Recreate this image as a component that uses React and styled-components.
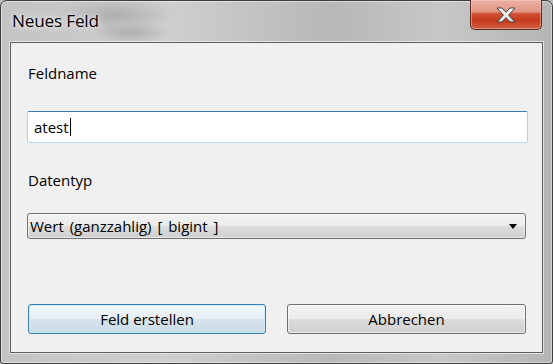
import React from "react";
import styled, { createGlobalStyle } from "styled-components";

const Global = createGlobalStyle`
  html, body { margin: 0; padding: 0; background: #b9b9b9; }
  body { font-family: "Open Sans", "Noto Sans", sans-serif; }
  * { box-sizing: border-box; }
`;

const Window = styled.div`
  width: 553px;
  height: 364px;
  border: 1px solid #3e3e3e;
  border-radius: 7px 7px 3px 3px;
  background:
    radial-gradient(ellipse 60px 18px at 115px 14px, rgba(140,140,140,0.45), rgba(140,140,140,0) 100%),
    radial-gradient(ellipse 40px 10px at 130px 32px, rgba(130,130,130,0.4), rgba(130,130,130,0) 100%),
    linear-gradient(to right, #c3c3c3 0%, #cfcfcf 30%, #b8b8b8 60%, #c7c7c7 80%, #b5b5b5 100%);
  box-shadow: inset 0 0 0 1px rgba(255,255,255,0.45);
  padding: 0 9px 10px 9px;
  display: flex;
  flex-direction: column;
`;

const TitleBar = styled.div`
  height: 41px;
  display: flex;
  align-items: flex-start;
  padding-left: 2px;
`;

const Title = styled.div`
  font-size: 17.2px;
  line-height: 22px;
  color: #000;
  margin-top: 9px;
  text-shadow: 0 0 8px rgba(255,255,255,0.9), 0 0 3px rgba(255,255,255,0.8);
  letter-spacing: -0.2px;
`;

const CloseButton = styled.div`
  margin-left: auto;
  margin-right: 1px;
  margin-top: -1px;
  width: 72px;
  height: 30px;
  border: 1px solid #5b2a22;
  border-top: none;
  border-radius: 0 0 5px 5px;
  background: linear-gradient(to bottom, #eab0a3 0%, #e39684 40%, #cf4f33 48%, #c7391d 70%, #d25e40 100%);
  box-shadow: inset 0 0 0 1px rgba(255,210,200,0.45);
  display: flex;
  align-items: center;
  justify-content: center;
`;

const Client = styled.div`
  flex: 1;
  background: #f0f0f0;
  border: 1px solid #5e5e5e;
  box-shadow: 0 0 0 1px rgba(235,235,235,0.85);
  display: flex;
  flex-direction: column;
  padding: 0 15px 0 16px;
`;

const Label = styled.div`
  font-size: 15px;
  color: #000;
  margin-left: 1px;
  margin-top: ${p => p.$top}px;
  line-height: 20px;
`;

const TextInput = styled.div`
  margin-top: ${p => p.$top}px;
  height: 32px;
  width: 501px;
  background: #fff;
  border: 1px solid #b5cfe7;
  border-top-color: #3d7bad;
  border-bottom-color: #b7d9ed;
  border-radius: 2px;
  display: flex;
  align-items: center;
  padding-left: 6px;
  font-size: 15px;
  color: #000;
`;

const Caret = styled.span`
  display: inline-block;
  width: 1px;
  height: 18px;
  background: #000;
  margin-left: 1px;
`;

const Select = styled.div`
  margin-top: ${p => p.$top}px;
  height: 26px;
  width: 499px;
  border: 1px solid #707070;
  border-radius: 3px;
  background: linear-gradient(to bottom, #f2f2f2 0%, #ebebeb 48%, #dddddd 52%, #cfcfcf 100%);
  box-shadow: inset 0 0 0 1px rgba(255,255,255,0.5);
  display: flex;
  align-items: center;
  padding: 0 8px 0 2px;
  font-size: 15px;
  color: #000;
`;

const SelectText = styled.span`
  flex: 1;
  word-spacing: 2px;
`;

const Arrow = styled.span`
  width: 0;
  height: 0;
  border-left: 4.5px solid transparent;
  border-right: 4.5px solid transparent;
  border-top: 5px solid #000;
`;

const ButtonRow = styled.div`
  margin-top: ${p => p.$top}px;
  display: flex;
  gap: 21px;
  padding-left: 1px;
`;

const Button = styled.div`
  width: ${p => p.$w}px;
  height: 30px;
  border: 1px solid ${p => (p.$default ? "#3c7fb1" : "#707070")};
  border-radius: 3px;
  background: ${p =>
    p.$default
      ? "linear-gradient(to bottom, #f3f7fa 0%, #e6eef3 48%, #d6e3ea 52%, #ccdde6 100%)"
      : "linear-gradient(to bottom, #f2f2f2 0%, #ebebeb 48%, #dddddd 52%, #cfcfcf 100%)"};
  box-shadow: inset 0 0 0 1px ${p => (p.$default ? "rgba(200,235,255,0.8)" : "rgba(255,255,255,0.6)")};
  display: flex;
  align-items: center;
  justify-content: center;
  font-size: 15px;
  color: #000;
`;

function CloseGlyph() {
  return (
    <svg width="20" height="16" viewBox="0 0 20 16">
      <defs>
        <linearGradient id="xg" x1="0" y1="0" x2="0" y2="1">
          <stop offset="0" stopColor="#ffffff" />
          <stop offset="1" stopColor="#d8d8d8" />
        </linearGradient>
      </defs>
      <polygon
        points="1,1 6,1 10,5.3 14,1 19,1 12.6,8 19,15 14,15 10,10.7 6,15 1,15 7.4,8"
        fill="url(#xg)"
        stroke="#3f3f3f"
        strokeWidth="1"
        strokeLinejoin="round"
      />
    </svg>
  );
}

export default function App() {
  return (
    <>
      <Global />
      <Window>
        <TitleBar>
          <Title>Neues Feld</Title>
          <CloseButton>
            <CloseGlyph />
          </CloseButton>
        </TitleBar>
        <Client>
          <Label $top={20}>Feldname</Label>
          <TextInput $top={28}>
            atest
            <Caret />
          </TextInput>
          <Label $top={27}>Datentyp</Label>
          <Select $top={23}>
            <SelectText>Wert (ganzzahlig) [ bigint ]</SelectText>
            <Arrow />
          </Select>
          <ButtonRow $top={65}>
            <Button $default $w={238}>Feld erstellen</Button>
            <Button $w={239}>Abbrechen</Button>
          </ButtonRow>
        </Client>
      </Window>
    </>
  );
}
